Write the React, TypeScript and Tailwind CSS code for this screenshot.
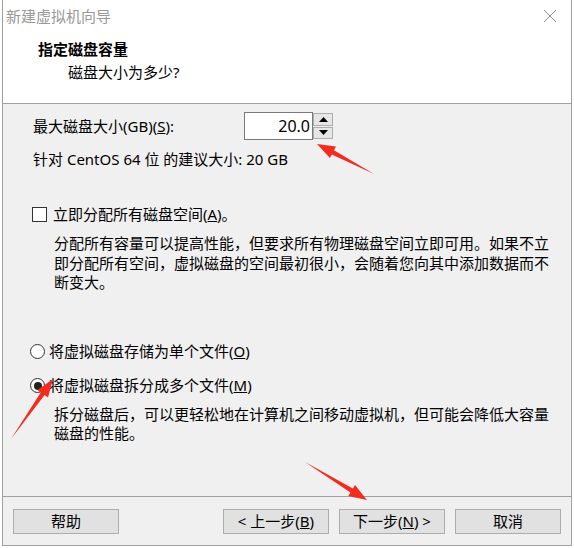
import React from "react";

const font = { fontFamily: '"Noto Sans", "Noto Sans CJK SC", sans-serif' };

const Btn: React.FC<{ children: React.ReactNode; className?: string }> = ({ children, className }) => (
  <div
    className={
      "h-[25px] w-[106px] border border-[#adadad] bg-[#e1e1e1] flex items-center justify-center text-[15px] text-black " +
      (className ?? "")
    }
  >
    {children}
  </div>
);

const Arrow: React.FC<{ x1: number; y1: number; x2: number; y2: number }> = ({ x1, y1, x2, y2 }) => {
  // tapered tail from (x1,y1) to head tip at (x2,y2)
  const dx = x2 - x1;
  const dy = y2 - y1;
  const len = Math.hypot(dx, dy);
  const ux = dx / len;
  const uy = dy / len;
  const nx = -uy;
  const ny = ux;
  const headLen = 18;
  const bx = x2 - ux * headLen;
  const by = y2 - uy * headLen;
  const p = (x: number, y: number) => `${x.toFixed(1)},${y.toFixed(1)}`;
  const pts = [
    p(x1, y1),
    p(bx + nx * 2.4, by + ny * 2.4),
    p(bx + nx * 6.5, by + ny * 6.5),
    p(x2, y2),
    p(bx - nx * 6.5, by - ny * 6.5),
    p(bx - nx * 2.4, by - ny * 2.4),
  ].join(" ");
  return <polygon points={pts} fill="#f22c1f" />;
};

export default function App() {
  return (
    <div className="relative w-[574px] h-[548px] bg-white overflow-hidden" style={font}>
      <div className="ml-[2px] w-[570px] h-[546px] border-x border-b border-[#a0a0a0] flex flex-col">
        {/* Title + header */}
        <div className="h-[104px] bg-white border-b border-[#a0a0a0] shrink-0">
          <div className="h-[32px] flex items-center justify-between pl-[3px] pr-[14px]">
            <span className="text-[15px] text-[#999999]">新建虚拟机向导</span>
            <svg width="14" height="14" viewBox="0 0 14 14">
              <path d="M1 1 L13 13 M13 1 L1 13" stroke="#8a8a8a" strokeWidth="1" />
            </svg>
          </div>
          <div className="pl-[35px] pt-[6px] text-[15px] font-bold leading-[22px] text-black">指定磁盘容量</div>
          <div className="pl-[65px] pt-[1px] text-[15px] leading-[22px] text-black">磁盘大小为多少?</div>
        </div>

        {/* Body */}
        <div className="flex-1 bg-[#f0f0f0] border-b border-[#a0a0a0] text-[15px] text-black">
          <div className="mt-[8px] flex items-center h-[28px] pl-[30px]">
            <span className="w-[211px]">
              最大磁盘大小(GB)(<u>S</u>):
            </span>
            <div className="h-[28px] w-[69px] bg-white border border-[#7a7a7a] flex items-center justify-end pr-[2px] text-[16px]">
              20.0
            </div>
            <div className="h-[28px] w-[20px] flex flex-col gap-[1px] py-[1px]">
              <div className="flex-1 bg-[#e6e6e6] border border-[#adadad] flex items-center justify-center">
                <svg width="9" height="5" viewBox="0 0 9 5">
                  <path d="M0 5 L4.5 0 L9 5 Z" fill="#000" />
                </svg>
              </div>
              <div className="flex-1 bg-[#e6e6e6] border border-[#adadad] flex items-center justify-center">
                <svg width="9" height="5" viewBox="0 0 9 5">
                  <path d="M0 0 L4.5 5 L9 0 Z" fill="#000" />
                </svg>
              </div>
            </div>
          </div>

          <div className="mt-[9px] pl-[30px] leading-[20px]">针对 CentOS 64 位 的建议大小: 20 GB</div>

          <div className="mt-[35px] pl-[29px] flex items-center h-[20px] gap-[6px]">
            <div className="w-[15px] h-[15px] bg-white border border-[#333333]" />
            <span>
              立即分配所有磁盘空间(<u>A</u>)。
            </span>
          </div>

          <div className="mt-[10px] pl-[51px] pr-[18px] leading-[19.5px]">
            分配所有容量可以提高性能，但要求所有物理磁盘空间立即可用。如果不立即分配所有空间，虚拟磁盘的空间最初很小，会随着您向其中添加数据而不断变大。
          </div>

          <div className="mt-[49px] pl-[27px] flex items-center h-[20px] gap-[4px]">
            <div className="w-[15px] h-[15px] rounded-full bg-white border border-[#333333]" />
            <span>
              将虚拟磁盘存储为单个文件(<u>O</u>)
            </span>
          </div>

          <div className="mt-[14px] pl-[27px] flex items-center h-[20px] gap-[4px]">
            <div className="w-[15px] h-[15px] rounded-full bg-white border border-[#333333] flex items-center justify-center">
              <div className="w-[8px] h-[8px] rounded-full bg-[#222222]" />
            </div>
            <span>
              将虚拟磁盘拆分成多个文件(<u>M</u>)
            </span>
          </div>

          <div className="mt-[9px] pl-[51px] pr-[18px] leading-[19.5px]">
            拆分磁盘后，可以更轻松地在计算机之间移动虚拟机，但可能会降低大容量磁盘的性能。
          </div>
        </div>

        {/* Footer */}
        <div className="h-[48px] bg-[#f0f0f0] shrink-0 flex items-start pt-[12px] pl-[10px]">
          <Btn>帮助</Btn>
          <Btn className="ml-[104px]">
            &lt; 上一步(<u>B</u>)
          </Btn>
          <Btn className="ml-[10px]">
            下一步(<u>N</u>) &gt;
          </Btn>
          <Btn className="ml-[10px]">取消</Btn>
        </div>
      </div>

      {/* red annotation arrows */}
      <svg className="absolute left-0 top-0 pointer-events-none" width="574" height="548">
        <Arrow x1={374} y1={174} x2={317} y2={144} />
        <Arrow x1={11} y1={439} x2={53} y2={379} />
        <Arrow x1={305} y1={462} x2={367} y2={500} />
      </svg>
    </div>
  );
}
